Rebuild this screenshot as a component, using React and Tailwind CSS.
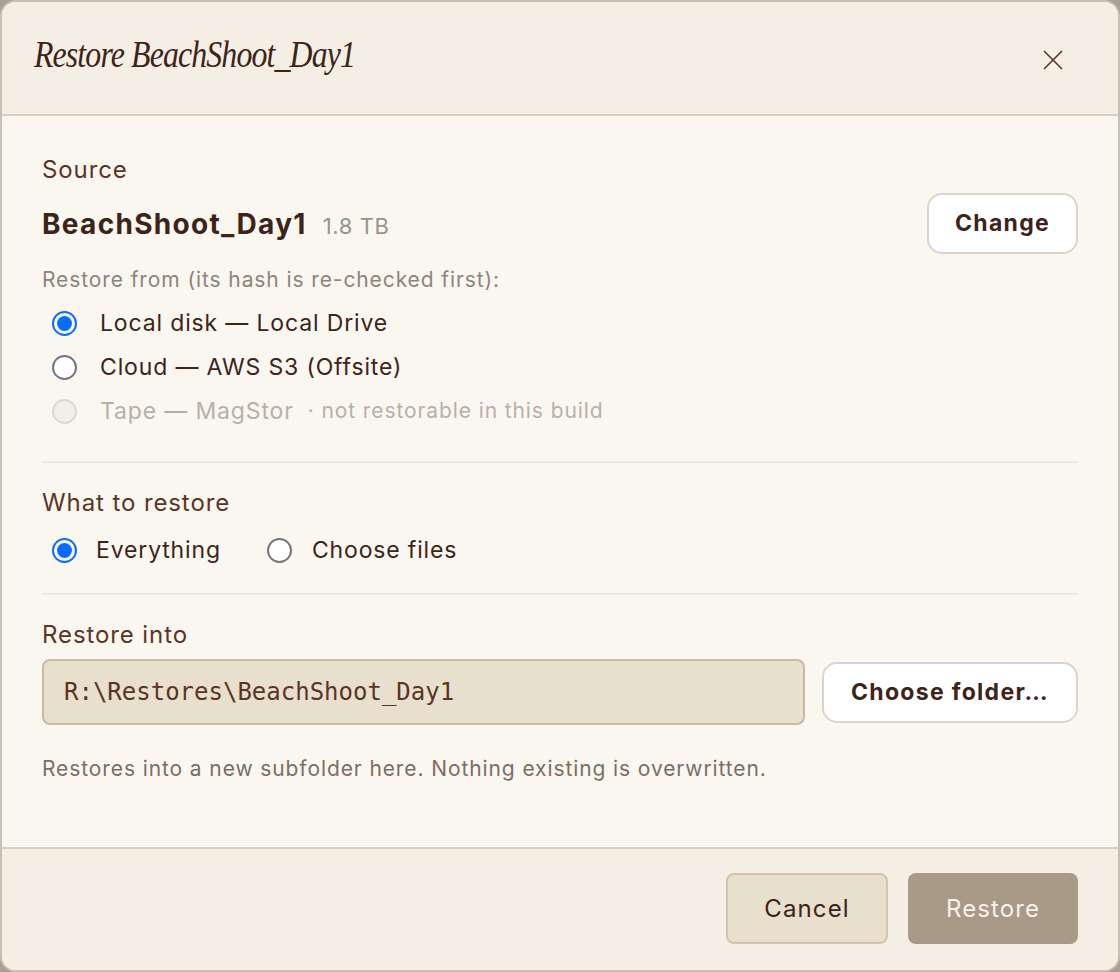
import { useState } from "react";

const SOURCES = [
  { id: "local", label: "Local disk — Local Drive" },
  { id: "cloud", label: "Cloud — AWS S3 (Offsite)" },
  { id: "tape", label: "Tape — MagStor", note: "· not restorable in this build", disabled: true }
];

function Radio({ checked, disabled }) {
  if (disabled) {
    return <span className="w-[25px] h-[25px] rounded-full border-2 border-[#dcd8d3] bg-[#f1efec] shrink-0" />;
  }
  if (checked) {
    return (
      <span className="w-[25px] h-[25px] rounded-full border-2 border-[#0a6cff] bg-white flex items-center justify-center shrink-0">
        <span className="w-[15px] h-[15px] rounded-full bg-[#0a6cff]" />
      </span>
    );
  }
  return <span className="w-[25px] h-[25px] rounded-full border-2 border-[#767676] bg-white shrink-0" />;
}

export default function App() {
  const [source, setSource] = useState("local");
  const [what, setWhat] = useState("all");

  return (
    <div className="bg-[#a8a096] min-h-screen" style={{ fontFamily: "Inter, 'Noto Sans', sans-serif" }}>
      <div className="h-[972px] w-[1120px] flex flex-col bg-[#faf7f1] border-2 border-[#c9c0b4] rounded-[16px] overflow-hidden">
        <header className="h-[114px] shrink-0 bg-[#f5eee5] border-b-2 border-[#d8cfc3] flex items-center justify-between pl-[32px] pr-[55px]">
          <h1
            className="italic text-[37px] tracking-[-1px] text-[#3d2418] pb-[6px] scale-x-[0.86] origin-left whitespace-nowrap"
            style={{ fontFamily: "'Liberation Serif', 'DejaVu Serif', serif" }}
          >
            Restore BeachShoot_Day1
          </h1>
          <button className="text-[#5a3a28] mt-[3px]">
            <svg width="20" height="20" viewBox="0 0 20 20" fill="none" stroke="currentColor" strokeWidth="1.7">
              <path d="M1 1L19 19M19 1L1 19" />
            </svg>
          </button>
        </header>

        <main className="flex-1 px-[40px] pt-[38px]">
          <div className="text-[24px] tracking-[0.9px] text-[#5a3424] leading-[32px]">Source</div>
          <div className="flex items-center justify-between mt-[7px]">
            <div className="flex items-baseline gap-[16px]">
              <span className="text-[28px] tracking-[1.3px] font-bold text-[#3d2418]">BeachShoot_Day1</span>
              <span className="text-[22px] tracking-[0.6px] text-[#9b928a]">1.8 TB</span>
            </div>
            <button className="h-[61px] w-[151px] rounded-[15px] bg-white border-2 border-[#ddd4c9] text-[23px] tracking-[1.3px] font-bold text-[#3d2418]">
              Change
            </button>
          </div>
          <div className="text-[21px] tracking-[0.9px] text-[#8d847c] mt-[11px] leading-[30px]">Restore from (its hash is re-checked first):</div>
          <div className="flex flex-col mt-[6px]">
            {SOURCES.map((s) => (
              <label
                key={s.id}
                className="flex items-center h-[44px] pl-[10px] cursor-pointer"
                onClick={() => !s.disabled && setSource(s.id)}
              >
                <Radio checked={source === s.id} disabled={s.disabled} />
                <span className={`ml-[23px] text-[23px] tracking-[0.85px] ${s.disabled ? "text-[#b8b0a8]" : "text-[#3d2418]"}`}>{s.label}</span>
                {s.note && <span className="ml-[14px] text-[21px] tracking-[0.9px] text-[#b8b0a8]">{s.note}</span>}
              </label>
            ))}
          </div>

          <div className="h-[2px] bg-[#efe9e1] mt-[28px]" />

          <div className="text-[24px] tracking-[0.9px] text-[#5a3424] leading-[32px] mt-[24px]">What to restore</div>
          <div className="flex items-center mt-[14px] pl-[10px] h-[34px]">
            <label className="flex items-center cursor-pointer" onClick={() => setWhat("all")}>
              <Radio checked={what === "all"} />
              <span className="ml-[19px] text-[23px] tracking-[0.85px] text-[#3d2418]">Everything</span>
            </label>
            <label className="flex items-center cursor-pointer ml-[46px]" onClick={() => setWhat("choose")}>
              <Radio checked={what === "choose"} />
              <span className="ml-[20px] text-[23px] tracking-[0.85px] text-[#3d2418]">Choose files</span>
            </label>
          </div>

          <div className="h-[2px] bg-[#efe9e1] mt-[26px]" />

          <div className="text-[24px] tracking-[0.9px] text-[#5a3424] leading-[32px] mt-[24px]">Restore into</div>
          <div className="flex items-center gap-[17px] mt-[8px]">
            <div
              className="flex-1 h-[66px] rounded-[8px] bg-[#e8dfcd] border-2 border-[#c7bba8] flex items-center pl-[20px] text-[24px] text-[#5a3424]"
              style={{ fontFamily: "'DejaVu Sans Mono', 'Liberation Mono', monospace" }}
            >
              R:\Restores\BeachShoot_Day1
            </div>
            <button className="h-[61px] w-[256px] rounded-[15px] bg-white border-2 border-[#ddd4c9] text-[23px] tracking-[1.3px] font-bold text-[#3d2418]">
              Choose folder…
            </button>
          </div>
          <div className="text-[21px] tracking-[0.9px] text-[#7a6e64] mt-[28px]">Restores into a new subfolder here. Nothing existing is overwritten.</div>
        </main>

        <footer className="h-[123px] shrink-0 bg-[#f5eee5] border-t-2 border-[#d8cfc3] flex items-center justify-end gap-[20px] pr-[40px] pb-[2px]">
          <button className="h-[71px] w-[162px] rounded-[8px] bg-[#e8dfcd] border-2 border-[#d0c5b3] text-[24px] tracking-[1.1px] text-[#3d2418]">
            Cancel
          </button>
          <button className="h-[71px] w-[170px] rounded-[8px] bg-[#a89a86] text-[24px] tracking-[1.1px] text-[#f8f2ea]">
            Restore
          </button>
        </footer>
      </div>
    </div>
  );
}
